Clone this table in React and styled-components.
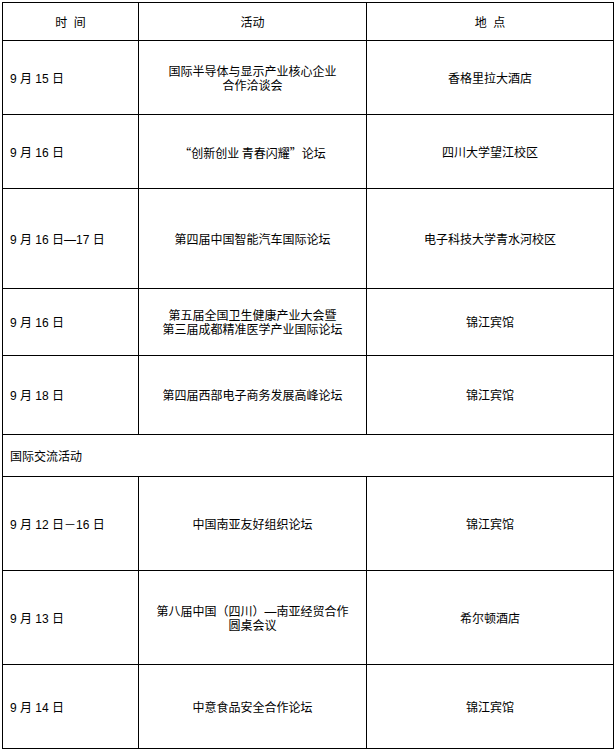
import React from 'react';
import styled, { createGlobalStyle } from 'styled-components';

const GlobalStyle = createGlobalStyle`
  html, body {
    margin: 0;
    padding: 0;
    background: #fff;
  }
  body {
    font-family: "Liberation Sans", "Noto Sans CJK SC", sans-serif;
    font-size: 12px;
    color: #000;
  }
`;

const Page = styled.div`
  padding: 2px 0 0 2px;
`;

const Table = styled.table`
  width: 611px;
  border-collapse: collapse;
  table-layout: fixed;
`;

const Col = styled.col`
  width: ${p => p.$w}px;
`;

const Row = styled.tr`
  height: ${p => p.$h}px;
`;

const HeadCell = styled.th`
  border: 1px solid #000;
  font-weight: normal;
  text-align: center;
  vertical-align: middle;
  padding: 2px 4px 0;
  line-height: 14px;
  white-space: pre;
`;

const Cell = styled.td`
  border: 1px solid #000;
  text-align: ${p => (p.$left ? 'left' : 'center')};
  vertical-align: middle;
  padding: ${p => (p.$left ? '2px 4px 0 7px' : '2px 4px 0')};
  line-height: 14px;
  font-family: ${p => (p.$cjk ? '"Noto Sans CJK SC", "Liberation Sans", sans-serif' : 'inherit')};
`;

const schedule = [
  { h: 74, time: '9 月 15 日', name: ['国际半导体与显示产业核心企业', '合作洽谈会'], place: '香格里拉大酒店' },
  { h: 74, time: '9 月 16 日', name: ['“创新创业 青春闪耀”论坛'], place: '四川大学望江校区', cjk: true },
  { h: 100, time: '9 月 16 日—17 日', name: ['第四届中国智能汽车国际论坛'], place: '电子科技大学青水河校区' },
  { h: 67, time: '9 月 16 日', name: ['第五届全国卫生健康产业大会暨', '第三届成都精准医学产业国际论坛'], place: '锦江宾馆' },
  { h: 79, time: '9 月 18 日', name: ['第四届西部电子商务发展高峰论坛'], place: '锦江宾馆' },
];

const exchange = [
  { h: 94, time: '9 月 12 日－16 日', name: ['中国南亚友好组织论坛'], place: '锦江宾馆' },
  { h: 94, time: '9 月 13 日', name: ['第八届中国（四川）—南亚经贸合作', '圆桌会议'], place: '希尔顿酒店' },
  { h: 84, time: '9 月 14 日', name: ['中意食品安全合作论坛'], place: '锦江宾馆' },
];

function EventRow({ item }) {
  return (
    <Row $h={item.h}>
      <Cell $left>{item.time}</Cell>
      <Cell $cjk={item.cjk}>
        {item.name.map((line, i) => (
          <React.Fragment key={i}>
            {i > 0 && <br />}
            {line}
          </React.Fragment>
        ))}
      </Cell>
      <Cell>{item.place}</Cell>
    </Row>
  );
}

export default function App() {
  return (
    <Page>
      <GlobalStyle />
      <Table>
        <colgroup>
          <Col $w={136} />
          <Col $w={228} />
          <Col $w={247} />
        </colgroup>
        <thead>
          <Row $h={38}>
            <HeadCell>{'时  间'}</HeadCell>
            <HeadCell>活动</HeadCell>
            <HeadCell>{'地  点'}</HeadCell>
          </Row>
        </thead>
        <tbody>
          {schedule.map((item, i) => (
            <EventRow key={i} item={item} />
          ))}
          <Row $h={42}>
            <Cell $left colSpan={3}>国际交流活动</Cell>
          </Row>
          {exchange.map((item, i) => (
            <EventRow key={i} item={item} />
          ))}
        </tbody>
      </Table>
    </Page>
  );
}
